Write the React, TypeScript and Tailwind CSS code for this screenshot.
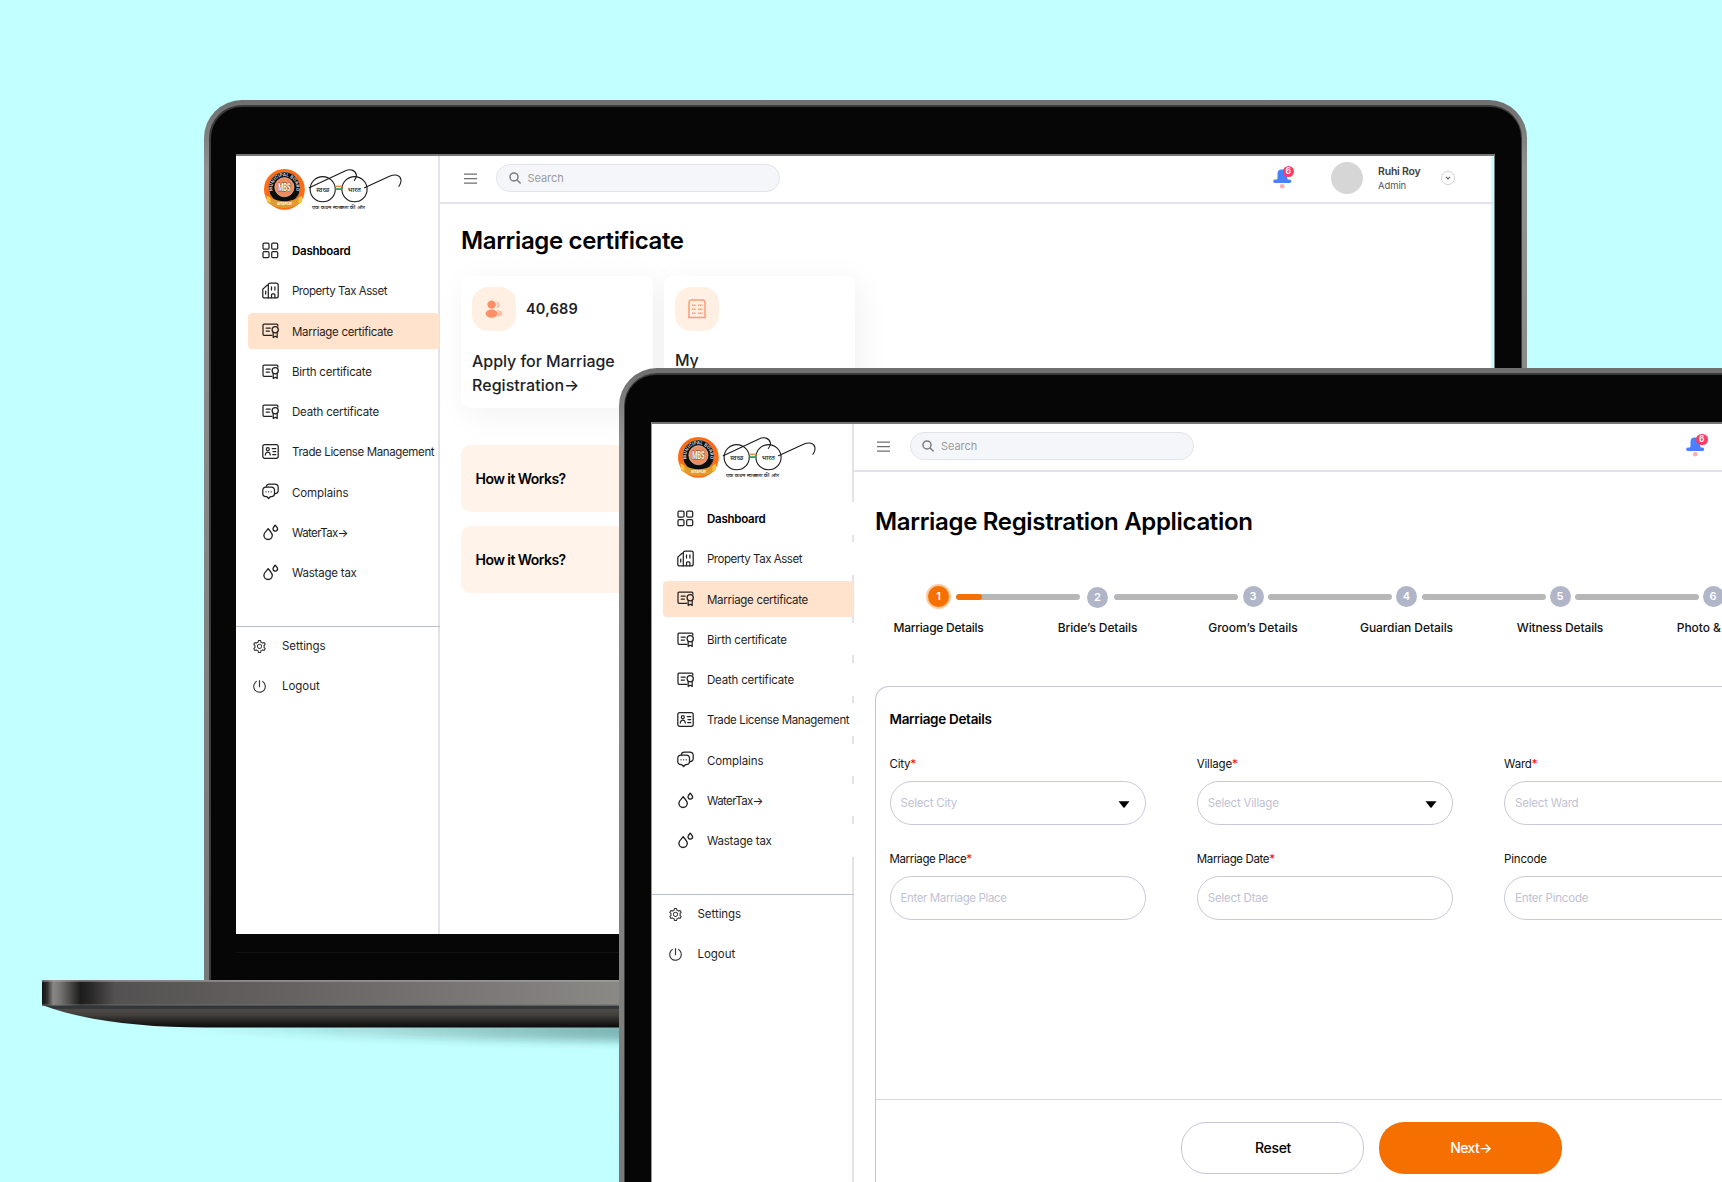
import type { ReactNode } from 'react';
import { AiOutlinePoweroff, AiOutlineSetting } from 'react-icons/ai';

type IconProps = { className?: string };

const stroke = {
  fill: 'none',
  stroke: 'currentColor',
  strokeWidth: 1.25,
  strokeLinecap: 'round' as const,
  strokeLinejoin: 'round' as const,
};

function GridIcon({ className }: IconProps) {
  return (
    <svg viewBox="0 0 17 17" className={className} {...stroke}>
      <rect x="1" y="1.2" width="6" height="6" rx="1.2" />
      <rect x="9.7" y="1.2" width="6" height="6" rx="1.2" />
      <rect x="1" y="9.7" width="6" height="6" rx="1.2" />
      <rect x="9.7" y="9.7" width="6" height="6" rx="1.2" />
    </svg>
  );
}

function BuildingIcon({ className }: IconProps) {
  return (
    <svg viewBox="0 0 17 17" className={className} {...stroke}>
      <path d="M6.3 15.9H2.2a1.4 1.4 0 0 1-1.4-1.4V7.8c0-.5.2-.9.6-1.2l3.1-2.9c.5-.4 1.3-.6 1.8-.4" />
      <path d="M6.3 15.9V3c0-1.200.8-2 2-2h5.900c1.200 0 2 .8 2 2v10.900c0 1.200-.8 2-2 2z" />
      <path d="M9.500 4.800v3.200M12.900 4.800v3.200M3.700 9.200v2.800M9.500 15.700v-2.800c0-.6.4-1 1-1h1.400c.6 0 1 .4 1 1v2.800" />
    </svg>
  );
}

function CertificateIcon({ className }: IconProps) {
  return (
    <svg viewBox="0 0 17 17" className={className} {...stroke}>
      <path d="M10 13.300H2c-.6 0-1-.4-1-1V3c0-.6.4-1 1-1h12.800c.6 0 1 .4 1 1v1.200" />
      <path d="M4.200 6.200h4M4.200 9h3.200" />
      <circle cx="13.200" cy="7.800" r="3.100" />
      <path d="M11.200 10.500v5l2-1.300 2 1.300v-5" />
    </svg>
  );
}

function IdCardIcon({ className }: IconProps) {
  return (
    <svg viewBox="0 0 17 17" className={className} {...stroke}>
      <rect x="0.800" y="1.500" width="15.400" height="13.800" rx="2" />
      <circle cx="5.800" cy="6.200" r="1.500" />
      <path d="M3.300 12c.2-2 1.200-3 2.500-3s2.300 1 2.500 3M10.200 5.500h3.600M11 8.500h2.800M10.700 11.500h3.100" />
    </svg>
  );
}

function ChatIcon({ className }: IconProps) {
  return (
    <svg viewBox="0 0 17 17" className={className} {...stroke}>
      <path d="M4 4h5.200c2 0 3.300 1.300 3.300 3.200v3.200c0 1.900-1.300 3.100-3.200 3.100H8.600l-2 2-2-2H4c-2 0-3.200-1.200-3.200-3.100V7.200C.8 5.300 2 4 4 4z" />
      <path d="M4.300 3.800C4.500 2 5.700 1 7.400 1h5.400c2 0 3.400 1.300 3.400 3.200v3.400c0 1.800-1.300 3-3.400 3.200" />
      <path d="M4 8.800h.1M6.600 8.800h.1M9.200 8.800h.1" strokeWidth="1.300" />
    </svg>
  );
}

function DropsIcon({ className }: IconProps) {
  return (
    <svg viewBox="0 0 17 17" className={className} {...stroke} strokeWidth="1.350">
      <path d="M6.200 4.800c-1.300 1.500-4.300 4.300-4.300 6.500a4.200 4.200 0 0 0 8.400 0c0-2.200-2.800-5-4.100-6.500z" />
      <path d="M13.200 1.200c-.8.900-2.200 2.300-2.200 3.600a2.300 2.300 0 0 0 4.600 0c0-1.300-1.600-2.700-2.400-3.600z" />
    </svg>
  );
}

const menu: { label: string; Icon: (p: IconProps) => ReactNode; bold?: boolean; active?: boolean; tracking: string }[] = [
  { label: 'Dashboard', Icon: GridIcon, bold: true, tracking: 'tracking-[-0.25px]' },
  { label: 'Property Tax Asset', Icon: BuildingIcon, tracking: 'tracking-[-0.47px]' },
  { label: 'Marriage certificate', Icon: CertificateIcon, active: true, tracking: 'tracking-[-0.3px]' },
  { label: 'Birth certificate', Icon: CertificateIcon, tracking: 'tracking-[-0.22px]' },
  { label: 'Death certificate', Icon: CertificateIcon, tracking: 'tracking-[-0.19px]' },
  { label: 'Trade License Management', Icon: IdCardIcon, tracking: 'tracking-[-0.37px]' },
  { label: 'Complains', Icon: ChatIcon, tracking: 'tracking-[-0.1px]' },
  { label: 'WaterTax→', Icon: DropsIcon, tracking: 'tracking-[-0.6px]' },
  { label: 'Wastage tax', Icon: DropsIcon, tracking: 'tracking-[-0.22px]' },
];

function Logo() {
  return (
    <svg viewBox="0 0 140 44" className="h-[44px] w-[140px] shrink-0">
      <defs>
        <path id="seal-arc" d="M8.700 24.400A12.100 12.100 0 1 1 32.100 24.400" />
      </defs>
      <circle cx="20.400" cy="22.400" r="20.400" fill="#ff6a13" />
      <circle cx="20.400" cy="20.800" r="15.800" fill="#0c0c0c" stroke="#c9b9ae" strokeWidth="0.500" />
      <circle cx="20.400" cy="20.200" r="9.600" fill="#ef8b5c" stroke="#f4d3c2" strokeWidth="0.600" />
      <text fontSize="4.400" fontWeight="700" fill="#dedede" fontFamily="Inter, sans-serif">
        <textPath href="#seal-arc" textLength="43" startOffset="0.500">MUNICIPAL BOARD</textPath>
      </text>
      <text x="20.400" y="24.400" textAnchor="middle" fontSize="11.500" fontWeight="700" fill="#fff" stroke="#6b3a26" strokeWidth="1" paintOrder="stroke" textLength="12.500" lengthAdjust="spacingAndGlyphs" fontFamily="Roboto, sans-serif">MBS</text>
      <path d="M2.500 28.500l4 2.200c8.500 4.600 19.500 4.600 28 0l3.500-2.200-.3 6.500-3.200 2.300c-8.500 5-20 5-28.300 0l-3.200-2z" fill="#e39a2c" />
      <path d="M2.500 28.500l4 2.200v5.300l-3.500-1zM38 28.500l-3.500 2.200v5.300l3.200-1z" fill="#f8c63c" />
      <text x="20.500" y="38" textAnchor="middle" fontSize="4" fontWeight="700" fill="#fff3c8" textLength="15" fontFamily="Inter, sans-serif">SITAPUR</text>
      <g fill="none" stroke="#1a1a1a" strokeWidth="1.100" strokeLinecap="round">
        <circle cx="58.700" cy="22.200" r="12.600" />
        <circle cx="90.500" cy="22.200" r="12.600" />
        <path d="M45.200 20.700L80.500 4.200c6-2.800 10.500-1.200 11.800 3.300.5 2-.6 4.300-2 6" />
        <path d="M100.500 20.800L125.500 9.300c6-2.600 10.300-1.200 11.400 3 .6 2.400-.6 4.800-2 7" />
      </g>
      <path d="M71.300 18.600h7v1.600h-7z" fill="#f08a3c" />
      <path d="M71.300 21.200h7v1.800h-7z" fill="#2f9e62" />
      <g fill="#222" fontFamily="'Noto Sans Devanagari', 'Noto Sans', sans-serif" textAnchor="middle">
        <text x="58.800" y="24.500" fontSize="6.400" fontWeight="500" textLength="13" lengthAdjust="spacingAndGlyphs">स्वच्छ</text>
        <text x="90.300" y="24.500" fontSize="6.400" fontWeight="500" textLength="13" lengthAdjust="spacingAndGlyphs">भारत</text>
        <text x="74.500" y="42.200" fontSize="5.200" fontWeight="500" textLength="53" lengthAdjust="spacingAndGlyphs">एक कदम स्वच्छता की ओर</text>
      </g>
    </svg>
  );
}

function Sidebar({ masked = false }: { masked?: boolean }) {
  return (
    <aside className={`h-full shrink-0 border-r-2 border-[#e2e2eb] ${masked ? 'w-[202px]' : 'w-[204px]'}`}>
      <div className={`pt-[11px] ${masked ? 'pl-[26px]' : 'pl-[28px]'}`}>
        <Logo />
      </div>
      <nav className="mt-[21px] flex flex-col gap-[3.75px]">
        {menu.map(({ label, Icon, bold, active, tracking }) => (
          <div key={label} className="flex h-[36.5px] items-center">
            <div
              className={`flex items-center ${masked ? 'ml-[11.500px] -mr-[2px] w-[190.500px]' : 'ml-[12px] w-[190.500px]'} ${
                active ? 'h-[36.5px] rounded-[4px] bg-[#ffe3cc]' : masked ? 'h-[32.5px] bg-white' : 'h-[32.5px]'
              } shrink-0`}
            >
              <Icon className="ml-[14px] size-[17px] shrink-0 text-[#222]" />
              <span
                className={`ml-[13px] whitespace-nowrap pt-[1.500px] text-[11.5px] leading-4 ${tracking} ${
                  bold ? 'font-semibold text-black' : 'text-[#1f1f1f]'
                }`}
              >
                {label}
              </span>
            </div>
          </div>
        ))}
      </nav>
      <div className="-mr-[2px] mt-[35.500px] border-t border-[#b9bfd0] text-[11.5px] tracking-[-0.05px] text-[#1f1f1f]">
        <div className="flex h-[39px] items-center pl-[16px]">
          <AiOutlineSetting className="size-[15px] text-[#333]" />
          <span className="ml-[15px]">Settings</span>
        </div>
        <div className="flex h-[41px] items-center pl-[16px]">
          <AiOutlinePoweroff className="size-[15px] text-[#333]" />
          <span className="ml-[15px]">Logout</span>
        </div>
      </div>
    </aside>
  );
}

function Bell() {
  return (
    <div className="relative h-[24px] w-[22px]">
      <svg viewBox="0 0 22 24" className="h-[24px] w-[22px]">
        <path d="M3.300 14.500c1 0 1.200-.6 1.200-1.500V8.500c0-2.400 1.600-4 3.800-4h2.200c2.200 0 3.800 1.600 3.800 4V13c0 .9.200 1.500 1.200 1.500h1a1.600 1.600 0 0 1 0 3.500H1.900a1.600 1.600 0 0 1 0-3.500z" fill="#4880ff" />
        <circle cx="9.200" cy="21.200" r="2.300" fill="#ffacac" />
      </svg>
      <span className="absolute left-[10px] top-[1px] flex size-[11.5px] items-center justify-center rounded-full bg-[#f93c65] text-[8.5px] font-semibold leading-none text-white">
        6
      </span>
    </div>
  );
}

function TopBar() {
  return (
    <header className="flex h-[48px] w-[1053px] shrink-0 items-center border-b-2 border-[#e2e2eb]">
      <svg viewBox="0 0 13 11" className="-mt-[2px] ml-[23.500px] h-[11px] w-[13px]" stroke="#707070" strokeWidth="1.300">
        <path d="M0 1.200h13M0 5.700h13M0 10.100h13" />
      </svg>
      <div className="-mt-[2px] ml-[19.500px] flex h-[28px] w-[284px] items-center rounded-full border border-[#e3e4ea] bg-[#f5f6fa]">
        <svg viewBox="0 0 12 12" className="-mt-px ml-[11.500px] size-[12px]" fill="none" stroke="#7c7c7c" strokeWidth="1.500" strokeLinecap="round">
          <circle cx="5" cy="4.900" r="4" />
          <path d="M8 8l3.200 3" />
        </svg>
        <span className="ml-[7px] text-[11px] tracking-[-0.05px] text-[#9b9b9b]">Search</span>
      </div>
      <div className="-mt-[5px] ml-[492.500px]">
        <Bell />
      </div>
      <div className="-mt-[3px] ml-[36.500px] size-[32px] rounded-full bg-[#d6d6d6]" />
      <div className="-mt-px ml-[15px] w-[60px] whitespace-nowrap">
        <div className="text-[10.5px] font-semibold leading-[14px] tracking-[-0.2px] text-[#404040]">Ruhi Roy</div>
        <div className="text-[9.5px] leading-[14px] tracking-[-0.1px] text-[#565656]">Admin</div>
      </div>
      <div className="-mt-[3px] ml-[3px] flex size-[14px] items-center justify-center rounded-full border border-[#cfcfcf]">
        <svg viewBox="0 0 6 4" className="h-[4px] w-[6px]" fill="none" stroke="#666" strokeWidth="1.200">
          <path d="M1 .8l2 2 2-2" />
        </svg>
      </div>
    </header>
  );
}

function Laptop({ children }: { children: ReactNode }) {
  return (
    <div className="h-full w-[1323px] rounded-t-[38px] bg-linear-to-b from-[#6f6f6f] from-0% via-[#8f9090] via-8% to-[#777] p-[5px] pb-0">
      <div className="h-full rounded-t-[33px] bg-[#3a3a3a] p-[1.5px] pb-0">
        <div className="flex h-full flex-col rounded-t-[31px] bg-[#060606] pl-[25.5px] pt-[47.5px]">{children}</div>
      </div>
    </div>
  );
}

function CertificateScreen() {
  return (
    <div className="flex h-[780px] w-[1259px] overflow-hidden border-t-2 border-r border-t-[#777] border-r-[#777] bg-[#c2ffff]">
      <div className="flex w-[1255px] shrink-0 bg-white">
        <Sidebar />
        <div className="flex flex-1 flex-col">
          <TopBar />
          <main className="pl-[21px] pt-[20px]">
            <h1 className="text-[24px] font-semibold leading-[34px] tracking-[-0.36px] text-black">Marriage certificate</h1>
            <div className="mt-[18px] flex gap-[11px]">
              <section className="h-[131.500px] w-[192px] rounded-[9px] bg-white px-[11px] pt-[11px] shadow-[5px_6px_32px_rgba(0,0,0,0.06)]">
                <div className="flex items-center">
                  <div className="flex size-[44px] items-center justify-center rounded-[16px] bg-[#fff0e3]">
                    <svg viewBox="0 0 18 18" className="size-[18px]">
                      <circle cx="6.600" cy="4.600" r="4.200" fill="#ff8f66" />
                      <ellipse cx="6.600" cy="13.600" rx="6" ry="4.200" fill="#ff8f66" />
                      <path d="M11 8.200a4.700 4.700 0 0 0 0-6.500 3.300 3.300 0 1 1 0 6.500zM11.500 16.800c2.200-1.600 2.200-5 .2-6.600 3 0 5.800 1.200 5.800 3.300 0 2-2.400 3.300-6 3.300z" fill="#ffbfa8" />
                    </svg>
                  </div>
                  <span className="ml-[10px] text-[14.5px] font-semibold tracking-[0.2px] text-[#202224]">40,689</span>
                </div>
                <p className="mt-[19px] whitespace-nowrap text-[16px] font-medium leading-[23.500px] tracking-[-0.04px] text-[#202224]">
                  Apply for Marriage
                  <br />
                  <span className="tracking-[0.05px]">Registration→</span>
                </p>
              </section>
              <section className="h-[131.500px] w-[191px] rounded-[9px] bg-white px-[11px] pt-[11px] shadow-[5px_6px_32px_rgba(0,0,0,0.06)]">
                <div className="flex size-[44px] items-center justify-center rounded-[16px] bg-[#fff0e3]">
                  <svg viewBox="0 0 18 20" className="h-[20px] w-[18px]" fill="none" stroke="#ff9a76" strokeWidth="1.500">
                    <path d="M0 18.500h18M1 18.500V3.500A2.500 2.500 0 0 1 3.500 1h11A2.500 2.500 0 0 1 17 3.500v15" />
                    <path d="M4 6.200h4M10 6.200h4.500M4 10.200h4M10 10.200h4.500M4 14.200h4M10 14.200h4.500" strokeDasharray="1.500 .5" />
                  </svg>
                </div>
                <p className="mt-[17.500px] text-[16px] font-medium leading-[23.500px] tracking-[-0.2px] text-[#202224]">My</p>
              </section>
            </div>
            <div className="mt-[37px] flex w-[600px] flex-col gap-[14.500px] text-[14px] font-semibold tracking-[-0.55px] text-black">
              <div className="flex h-[67px] items-center rounded-[10px] bg-[#fff3ea] pl-[14.500px]">How it Works?</div>
              <div className="flex h-[67px] items-center rounded-[10px] bg-[#fff3ea] pl-[14.500px]">How it Works?</div>
            </div>
          </main>
        </div>
      </div>
    </div>
  );
}

const steps = [
  { n: 1, label: 'Marriage Details', cell: 'w-[90px]', offset: 'ml-[18.500px]', bar: 'ml-[-27.500px]', drop: '', tracking: 'tracking-[-0.26px]' },
  { n: 2, label: 'Bride’s Details', cell: 'w-[90px]', offset: 'ml-[-27.500px]', bar: 'ml-[-28.500px]', drop: 'pt-[0.500px]', tracking: 'tracking-[-0.1px]' },
  { n: 3, label: 'Groom’s Details', cell: 'w-[90px]', offset: 'ml-[-30px]', bar: 'ml-[-30px]', drop: '', tracking: 'tracking-[0px]' },
  { n: 4, label: 'Guardian Details', cell: 'w-[92px]', offset: 'ml-[-31.500px]', bar: 'ml-[-31px]', drop: '', tracking: 'tracking-[-0.08px]' },
  { n: 5, label: 'Witness Details', cell: 'w-[90px]', offset: 'ml-[-30.500px]', bar: 'ml-[-30px]', drop: '', tracking: 'tracking-[-0.16px]' },
  { n: 6, label: 'Photo & Sign', cell: 'w-[90px]', offset: 'ml-[-31px]', bar: '', drop: '', tracking: 'tracking-[-0.05px]' },
];

function Stepper() {
  return (
    <div className="flex items-start">
      {steps.map(({ n, label, cell, offset, bar, drop, tracking }) => (
        <div key={n} className="flex shrink-0 items-start">
          <div className={`${cell} ${offset} ${drop} flex shrink-0 flex-col items-center whitespace-nowrap`}>
            <span
              className={`flex size-[21px] items-center justify-center rounded-full text-[11px] font-semibold text-white ${
                n === 1 ? 'bg-[#f57000] shadow-[0_0_1px_2px_#fbc79a]' : 'bg-[#b0b5c7]'
              }`}
            >
              {n}
            </span>
            <span className={`mt-[12.500px] text-[12px] font-medium leading-4 text-[#111] ${tracking}`}>{label}</span>
          </div>
          {bar && (
            <div className={`${bar} ${drop} mt-[7.500px] w-[124px] shrink-0`}>
              <div className="h-[6px] overflow-hidden rounded-full bg-[#b7b7b7]">
                {n === 1 && <div className="h-full w-[26px] rounded-full bg-[#f57000]" />}
              </div>
            </div>
          )}
        </div>
      ))}
    </div>
  );
}

const fields = [
  { label: 'City', required: true, placeholder: 'Select City', select: true, tight: false },
  { label: 'Village', required: true, placeholder: 'Select Village', select: true, tight: false },
  { label: 'Ward', required: true, placeholder: 'Select Ward', select: true, tight: false },
  { label: 'Marriage Place', required: true, placeholder: 'Enter Marriage Place', select: false, tight: true },
  { label: 'Marriage Date', required: true, placeholder: 'Select Dtae', select: false, tight: true },
  { label: 'Pincode', required: false, placeholder: 'Enter Pincode', select: false, tight: false },
];

function RegistrationScreen() {
  return (
    <div className="flex h-[780px] w-[1259px] shrink-0 overflow-hidden border-l border-t-2 border-l-[#999] border-t-[#777] bg-white">
      <Sidebar masked />
      <div className="flex w-[1055px] shrink-0 flex-col">
        <TopBar />
        <main className="flex flex-1 flex-col pl-[21.500px] pt-[33px]">
          <h1 className="text-[24px] font-semibold leading-[34px] tracking-[-0.33px] text-black">
            Marriage Registration Application
          </h1>
          <div className="mt-[47px]">
            <Stepper />
          </div>
          <section className="mt-[49.500px] flex w-[1000px] flex-1 flex-col rounded-tl-[14px] border-l border-t border-[#c5c6d6]">
            <div className="h-[413.500px] shrink-0 border-b-[1.500px] border-[#d5d6e2] pl-[13.500px] pt-[22px]">
              <h2 className="text-[13.5px] font-semibold leading-5 tracking-[-0.31px] text-black">Marriage Details</h2>
              <div className="mt-[27px] grid grid-cols-[repeat(3,256px)] gap-x-[51.300px] gap-y-[25.500px]">
                {fields.map((f) => (
                  <label key={f.label} className="block">
                    <span className={`block text-[11.5px] leading-4 text-[#111] ${f.tight ? 'tracking-[-0.37px]' : 'tracking-[-0.2px]'}`}>
                      {f.label}
                      {f.required && <span className="text-[#f00]">*</span>}
                    </span>
                    <span
                      className={`mt-[9.500px] flex h-[44px] items-center justify-between rounded-full border border-[#c9cad8] pl-[10px] pr-[14.500px] pt-[2px] text-[11.5px] text-[#bfc2d3] ${
                        f.placeholder.length > 15 ? 'tracking-[-0.38px]' : 'tracking-[-0.2px]'
                      }`}
                    >
                      {f.placeholder}
                      {f.select && (
                        <svg viewBox="0 0 12 7" className="h-[7px] w-[12px]">
                          <path d="M.5.300h11L6.600 6.500a.8.800 0 0 1-1.200 0z" fill="#000" />
                        </svg>
                      )}
                    </span>
                  </label>
                ))}
              </div>
            </div>
            <div className="flex gap-[14.500px] pl-[305px] pt-[22px] text-[14px] tracking-[-0.35px]">
              <button className="h-[51.500px] w-[183px] rounded-[25px] border border-[#c5c6d6] pl-px font-medium text-black">Reset</button>
              <button className="h-[51.500px] w-[183px] rounded-[25px] bg-[#f57000] pl-[2px] font-medium tracking-[-0.6px] text-white">Next→</button>
            </div>
          </section>
        </main>
      </div>
    </div>
  );
}

function LaptopBase() {
  return (
    <svg viewBox="0 0 700 80" className="h-[80px] w-[700px]">
      <defs>
        <linearGradient id="deck" x1="0" x2="700" y1="0" y2="0" gradientUnits="userSpaceOnUse">
          <stop offset="0" stopColor="#111" />
          <stop offset="0.008" stopColor="#333" />
          <stop offset="0.016" stopColor="#8a8886" />
          <stop offset="0.026" stopColor="#777573" />
          <stop offset="0.055" stopColor="#1c1c1c" />
          <stop offset="0.070" stopColor="#2a2929" />
          <stop offset="0.105" stopColor="#545152" />
          <stop offset="0.300" stopColor="#615e5d" />
          <stop offset="0.830" stopColor="#8b8986" />
        </linearGradient>
        <linearGradient id="lip" x1="0" x2="0" y1="25" y2="48" gradientUnits="userSpaceOnUse">
          <stop offset="0" stopColor="#333638" />
          <stop offset="0.150" stopColor="#35383a" />
          <stop offset="0.200" stopColor="#4d4a48" />
          <stop offset="0.450" stopColor="#403d3b" />
          <stop offset="0.900" stopColor="#111" />
          <stop offset="1" stopColor="#0a0a0a" />
        </linearGradient>
        <linearGradient id="cast" x1="120" x2="640" y1="0" y2="0" gradientUnits="userSpaceOnUse">
          <stop offset="0" stopColor="#1d4444" stopOpacity="0" />
          <stop offset="1" stopColor="#1d4444" stopOpacity="0.450" />
        </linearGradient>
        <filter id="soft" x="-10%" y="-100%" width="120%" height="300%">
          <feGaussianBlur stdDeviation="4" />
        </filter>
        <clipPath id="below">
          <rect x="0" y="47" width="700" height="33" />
        </clipPath>
      </defs>
      <g clipPath="url(#below)">
        <path d="M110 40H700V62C450 62 250 56 110 46z" fill="url(#cast)" filter="url(#soft)" />
      </g>
      <path d="M0 25H700V47.500H165C95 47.500 40 40 0 25z" fill="url(#lip)" />
      <rect width="700" height="25.500" fill="url(#deck)" />
      <rect x="0" width="700" height="1.800" fill="#a3a5a3" opacity="0.650" />
      <rect x="0" y="24.300" width="700" height="1" fill="#6c7071" opacity="0.700" />
    </svg>
  );
}

export default function App() {
  return (
    <div className="relative h-[1182px] w-[1722px] overflow-hidden bg-[#c2ffff] font-[Inter,'Noto_Sans',sans-serif]">
      <div className="absolute left-[204px] top-[100px] h-[880px]">
        <Laptop>
          <CertificateScreen />
          <div className="mt-[18px] h-px w-full bg-[#121212]" />
        </Laptop>
      </div>
      <div className="absolute left-[42px] top-[980px]">
        <LaptopBase />
      </div>
      <div className="absolute left-[618.5px] top-[368px] h-[880px]">
        <Laptop>
          <RegistrationScreen />
        </Laptop>
      </div>
    </div>
  );
}
